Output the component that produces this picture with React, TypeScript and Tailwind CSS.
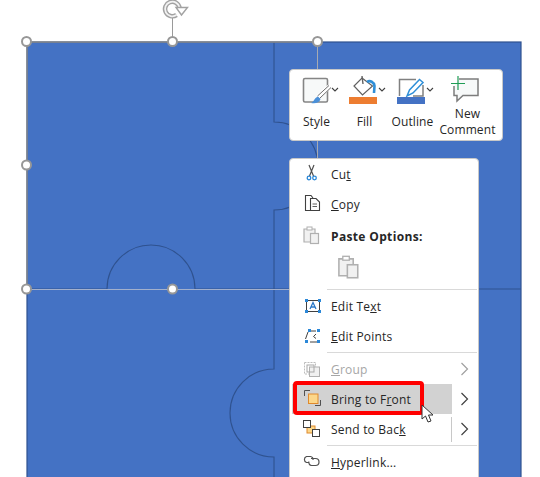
import React from "react";

const Chevron = ({ color = "#404040" }: { color?: string }) => (
  <svg width="9" height="14" viewBox="0 0 9 14" fill="none">
    <polyline points="1.5,1 7.5,7 1.5,13" stroke={color} strokeWidth="1.2" />
  </svg>
);

const Canvas = () => (
  <svg className="absolute left-0 top-0" width="540" height="477" viewBox="0 0 540 477" fill="none">
    <rect x="27" y="42" width="494" height="440" fill="#4472c4" stroke="#2f528f" strokeWidth="1.2" />
    <g stroke="#2f528f" strokeWidth="1.1">
      <path d="M274 42 V122 A44 44 0 0 1 274 210 V369 A44 44 0 0 0 274 457 V477" />
      <path d="M27 289 H107 A44 44 0 0 1 195 289 H521" />
    </g>
    <path d="M27 289.5 H290" stroke="#a3b0cc" />
    <path d="M317.5 42 V158" stroke="#a6aab2" />
    <path d="M172.5 18 V42" stroke="#9a9a9a" />
    <path d="M27 42 H317" stroke="#8d8d8d" strokeWidth="1.4" />
    <path d="M27 42 V289" stroke="#8d8d8d" strokeWidth="1.4" />
    <g fill="#fff" stroke="#979797" strokeWidth="2">
      <circle cx="26.5" cy="41.5" r="4.5" />
      <circle cx="172.5" cy="41.5" r="4.5" />
      <circle cx="317.5" cy="41.5" r="4.5" />
      <circle cx="26.5" cy="165" r="4.5" />
      <circle cx="26.5" cy="289" r="4.5" />
      <circle cx="172.5" cy="289" r="4.5" />
    </g>
    <path d="M176.5 15 A7.3 7.3 0 1 1 179.5 7.5" stroke="#a2a2a2" strokeWidth="4.6" />
    <path d="M176.5 15 A7.3 7.3 0 1 1 179.5 7.5" stroke="#f2f2f2" strokeWidth="1.8" />
    <path d="M176 7.5 H187.5 L181.5 15 Z" fill="#fff" stroke="#a2a2a2" strokeWidth="1.4" />
  </svg>
);

const ToolChevron = ({ x }: { x: number }) => (
  <polyline points={`${x - 3},11 ${x},14 ${x + 3},11`} stroke="#404040" strokeWidth="1.1" fill="none" />
);

const StyleIcon = () => (
  <svg width="53" height="30" viewBox="0 0 53 30" fill="none" className="overflow-visible">
    <rect x="13.5" y="1.5" width="24" height="23.5" rx="1.5" fill="#f7f9f9" stroke="#858585" strokeWidth="1.6" />
    <path d="M39.5 9.5 L28 20" stroke="#fff" strokeWidth="4.5" />
    <path d="M39 8.5 L27.5 19 M41 10.5 L29.5 21.5" stroke="#6e6e6e" strokeWidth="1" />
    <path d="M21 26 C24 25 24 21 28 19.5 L30.5 22 C29.5 26 25 27 21 26 Z" fill="#4a90d9" />
    <ToolChevron x={45} />
  </svg>
);

const FillIcon = () => (
  <svg width="43" height="30" viewBox="0 0 43 30" fill="none" className="overflow-visible">
    <path d="M19 1 L29.5 9 L19.5 18 L11 9 Z" fill="#fff" stroke="#606060" strokeWidth="1.2" />
    <path d="M19 -1 L20 7" stroke="#606060" strokeWidth="1.4" />
    <path d="M24 5 C27 3 31 5 31.5 9 L31 16" stroke="#2f8fd8" strokeWidth="2.6" />
    <rect x="6" y="20" width="28" height="7" fill="#ed7d31" />
    <ToolChevron x={39} />
  </svg>
);

const OutlineIcon = () => (
  <svg width="53" height="30" viewBox="0 0 53 30" fill="none" className="overflow-visible">
    <path d="M30 2.5 H13.5 V19" stroke="#808080" strokeWidth="1.5" />
    <path d="M37 8 V19 H27" stroke="#808080" strokeWidth="1.5" />
    <path d="M21 19 L23.5 13 L33.5 2.5 L37 5.5 L27 16 Z" fill="#fff" stroke="#2f8fd8" strokeWidth="1.5" />
    <rect x="11" y="20" width="28" height="7" fill="#4472c4" />
    <ToolChevron x={44} />
  </svg>
);

const CommentIcon = () => (
  <svg width="60" height="30" viewBox="0 0 60 30" fill="none" className="overflow-visible">
    <path d="M21 2 H40 V18.5 H25 L19 24 V18.5 H16 V9" fill="#f7f9f9" stroke="#7c7c7c" strokeWidth="1.5" />
    <path d="M13 6.5 H27 M20 -1 V13" stroke="#1f9d55" strokeWidth="1.2" />
  </svg>
);

const Tool = ({ width, icon, label }: { width: string; icon: React.ReactNode; label: React.ReactNode }) => (
  <div className={`flex flex-col items-center pt-[7px] ${width}`}>
    {icon}
    <div className="mt-[7px] text-center text-[12px] leading-[16px] tracking-[0.1px] text-[#262626]">{label}</div>
  </div>
);

const CutIcon = () => (
  <svg width="20" height="20" viewBox="0 0 20 20" fill="none">
    <path d="M8 1 L12.5 12 M13 1 L8.5 12" stroke="#505050" strokeWidth="1.2" />
    <circle cx="8" cy="14" r="1.8" stroke="#2b88d8" strokeWidth="1.3" />
    <circle cx="13.5" cy="14" r="1.8" stroke="#2b88d8" strokeWidth="1.3" />
  </svg>
);

const CopyIcon = () => (
  <svg width="20" height="20" viewBox="0 0 20 20" fill="none">
    <path d="M9 16.5 H4.5 V1.5 H10 L12 4" stroke="#404040" strokeWidth="1.1" />
    <path d="M9.5 4.5 H15 L18.5 8 V16.5 H9.5 Z" fill="#fff" stroke="#404040" strokeWidth="1.1" />
    <path d="M11.5 10 H16 M11.5 12.5 H16" stroke="#606060" />
  </svg>
);

const PasteIcon = ({ size }: { size: number }) => (
  <svg width={size} height={size} viewBox="0 1 20 20" fill="none">
    <path d="M3 4 H14 V17 H3 Z" fill="#f1f1f1" stroke="#b0b0b0" strokeWidth="1.2" />
    <rect x="6" y="2" width="5" height="3" fill="#fff" stroke="#b0b0b0" />
    <rect x="9.5" y="8.5" width="8" height="10" fill="#f1f1f1" stroke="#b0b0b0" strokeWidth="1.2" />
  </svg>
);

const Corners = ({ pts }: { pts: number[][] }) => (
  <g fill="#2b88d8">
    {pts.map(([x, y]) => (
      <rect key={`${x}-${y}`} x={x} y={y} width="3" height="3" />
    ))}
  </g>
);

const EditTextIcon = () => (
  <svg width="20" height="20" viewBox="0 0 20 20" fill="none">
    <rect x="5.5" y="4.5" width="13" height="11" stroke="#404040" />
    <Corners pts={[[4, 3], [17, 3], [4, 14], [17, 14]]} />
    <path d="M9 13 L12 6.5 L15 13 M10 11 H14" stroke="#2b78c8" strokeWidth="1.3" />
  </svg>
);

const EditPointsIcon = () => (
  <svg width="20" height="20" viewBox="0 0 20 20" fill="none">
    <path d="M7 6 L4.5 13 M9 16 H17 M10 5 H15 M15 8 L12.5 10.5 L15 12.5" stroke="#404040" />
    <Corners pts={[[7, 3], [16, 3], [4, 14], [16, 14]]} />
  </svg>
);

const GroupIcon = () => (
  <svg width="20" height="20" viewBox="0 0 20 20" fill="none">
    <path d="M3.5 3.5 H14.5 V8 M3.5 3.5 V15 H8" stroke="#bdbdbd" strokeDasharray="2 1" />
    <rect x="8.5" y="8" width="10" height="9.5" fill="#f0f0f0" stroke="#b0b0b0" />
    <rect x="6" y="6" width="7" height="7" stroke="#a8a8a8" />
  </svg>
);

const FrontIcon = () => (
  <svg width="20" height="20" viewBox="0 0 20 20" fill="none">
    <path d="M2.5 7 V1.5 H8" stroke="#505050" />
    <path d="M18.5 11 V16.5 H13" stroke="#505050" />
    <rect x="6.5" y="5" width="9.5" height="9.5" fill="#fcd78a" stroke="#e08a2c" />
  </svg>
);

const BackIcon = () => (
  <svg width="20" height="20" viewBox="0 0 20 20" fill="none">
    <rect x="6" y="7" width="8" height="7" fill="#fcd78a" stroke="#e08a2c" />
    <rect x="2.5" y="1.5" width="7" height="7" fill="#fff" stroke="#404040" />
    <rect x="11.5" y="10.5" width="7" height="7" fill="#fff" stroke="#404040" />
  </svg>
);

const LinkIcon = () => (
  <svg width="20" height="20" viewBox="0 0 20 20" fill="none">
    <path d="M8 10.5 H5.5 A3.2 3.2 0 0 1 5.5 4.5 H9.5 A3 3 0 0 1 12 8" stroke="#505050" strokeWidth="1.2" />
    <path d="M10 6.5 H14.5 A3.2 3.2 0 0 1 14.5 13.5 H10.5 A3 3 0 0 1 8 9.5" stroke="#505050" strokeWidth="1.2" />
  </svg>
);

const Sep = () => (
  <div className="flex h-[3px] items-center pl-[37px] pr-px">
    <div className="h-px w-full bg-[#d9d9d9]" />
  </div>
);

const Row = ({ icon, children, dim, narrow }: { icon: React.ReactNode; children: React.ReactNode; dim?: boolean; narrow?: boolean }) => (
  <div className={`flex h-[30px] items-center text-[12px] tracking-[0.2px] ${dim ? "text-[#a6a6a6]" : "text-[#262626]"}`}>
    <div className={`flex shrink-0 justify-center ${narrow ? "w-[39px]" : "w-[41px]"}`}>{icon}</div>
    <div className="pt-px">{children}</div>
  </div>
);

const Cursor = () => (
  <svg className="absolute left-[421px] top-[404px]" width="14" height="20" viewBox="0 0 14 20" fill="none">
    <path d="M1 1 V15 L4.5 12 L7 18 L10 17 L7.5 11 H12 Z" fill="#fff" stroke="#333" strokeWidth="1" />
  </svg>
);

export default function App() {
  return (
    <div className="relative h-[477px] w-[540px] overflow-hidden bg-white font-['Open_Sans',sans-serif]">
      <Canvas />

      <div className="absolute left-[289px] top-[69px] flex h-[72px] w-[214px] rounded-[4px] border border-[#c8c8c8] bg-white">
        <Tool width="w-[53px]" icon={<StyleIcon />} label="Style" />
        <Tool width="w-[43px]" icon={<FillIcon />} label="Fill" />
        <Tool width="w-[53px]" icon={<OutlineIcon />} label="Outline" />
        <div className="flex w-[57px] flex-col items-center pt-[7px] text-center text-[12px] leading-[16px] tracking-[0.1px] text-[#262626]">
          <CommentIcon />
          <div className="mt-[-1px]">New<br />Comment</div>
        </div>
      </div>

      <div className="absolute left-[289px] top-[158px] h-[330px] w-[190px] rounded-[4px] border border-[#c8c8c8] bg-white">
        <Row icon={<CutIcon />}>Cu<u>t</u></Row>
        <Row icon={<CopyIcon />}><u>C</u>opy</Row>
        <div className="mt-[2px]">
          <Row icon={<PasteIcon size={20} />}><b className="font-bold tracking-[0.35px]">Paste Options:</b></Row>
        </div>
        <div className="flex h-[37px] pl-[45px] pt-[4px]">
          <PasteIcon size={26} />
        </div>
        <Sep />
        <Row icon={<EditTextIcon />}>Edit Te<u>x</u>t</Row>
        <Row icon={<EditPointsIcon />}><u>E</u>dit Points</Row>
        <Sep />
        <div className="flex items-center">
          <div className="w-[162px]">
            <Row dim icon={<GroupIcon />}><u>G</u>roup</Row>
          </div>
          <div className="ml-[8px]"><Chevron color="#a0a0a0" /></div>
        </div>
        <div className="flex items-center">
          <div className="w-[162px] pl-[2px]">
            <div className="bg-[#d2d2d2]">
              <Row narrow icon={<FrontIcon />}>Bring to F<u>r</u>ont</Row>
            </div>
          </div>
          <div className="ml-[8px]"><Chevron /></div>
        </div>
        <div className="flex items-center">
          <div className="flex w-[162px] items-center">
            <div className="flex-1">
              <Row icon={<BackIcon />}>Send to Bac<u>k</u></Row>
            </div>
            <div className="h-[25px] w-px bg-[#c8c8c8]" />
          </div>
          <div className="ml-[8px]"><Chevron /></div>
        </div>
        <Sep />
        <Row icon={<LinkIcon />}><u>H</u>yperlink...</Row>
      </div>

      <div className="absolute left-[293px] top-[381px] h-[34px] w-[131px] rounded-[4px] border-4 border-[#ff0000]" />
      <Cursor />
    </div>
  );
}
